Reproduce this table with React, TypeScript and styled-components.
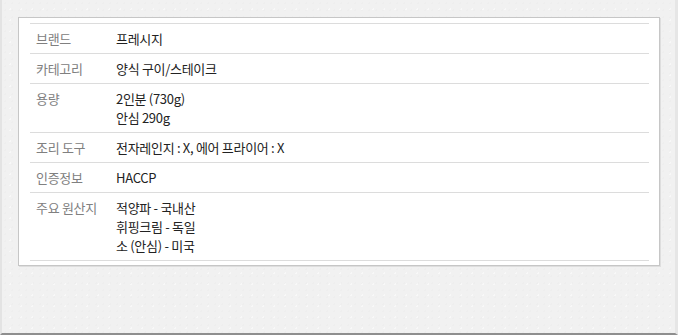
import { FC } from 'react'
import styled, { createGlobalStyle } from 'styled-components'

const GlobalStyle = createGlobalStyle`
  html, body {
    margin: 0;
    padding: 0;
    background: #f0f0f0;
  }
`

const Frame = styled.div`
  box-sizing: border-box;
  width: 678px;
  height: 335px;
  padding: 17px 18px 0 18px;
  background-color: #f1f1f1;
  background-image: radial-gradient(rgba(0, 0, 0, 0.012) 1px, transparent 1px),
    radial-gradient(rgba(255, 255, 255, 0.5) 1px, transparent 1px);
  background-size: 7px 7px, 11px 11px;
  background-position: 0 0, 3px 4px;
  border-left: 2px solid #e3e3e3;
  border-right: 3px solid #e6e6e6;
  border-bottom: 2px solid #8e8e8e;
  font-family: 'Noto Sans CJK KR', 'Noto Sans', sans-serif;
`

const Box = styled.div`
  box-sizing: border-box;
  width: 642px;
  margin-left: -2px;
  padding: 5px 10px 4px 11px;
  background: #fff;
  border: 1px solid #c6c6c6;
  box-shadow: 1px 1px 0 #dedede;
`

const Table = styled.div`
  border-top: 1px solid #dcdcdc;
`

const Row = styled.div`
  display: grid;
  grid-template-columns: 86px 1fr;
  padding: 5px 0;
  border-bottom: 1px solid #dcdcdc;
  font-size: 13px;
  line-height: 19px;
  letter-spacing: -0.3px;
`

const Label = styled.div`
  padding-left: 6px;
  color: #808080;
`

const Value = styled.div`
  color: #222;
`

const Line = styled.div``

type Spec = { label: string; values: string[] }

const specs: Spec[] = [
  { label: '브랜드', values: ['프레시지'] },
  { label: '카테고리', values: ['양식 구이/스테이크'] },
  { label: '용량', values: ['2인분 (730g)', '안심 290g'] },
  { label: '조리 도구', values: ['전자레인지 : X, 에어 프라이어 : X'] },
  { label: '인증정보', values: ['HACCP'] },
  { label: '주요 원산지', values: ['적양파 - 국내산', '휘핑크림 - 독일', '소 (안심) - 미국'] },
]

const App: FC = () => {
  return (
    <>
      <GlobalStyle />
      <Frame>
        <Box>
          <Table>
            {specs.map((s) => (
              <Row key={s.label}>
                <Label>{s.label}</Label>
                <Value>
                  {s.values.map((v) => (
                    <Line key={v}>{v}</Line>
                  ))}
                </Value>
              </Row>
            ))}
          </Table>
        </Box>
      </Frame>
    </>
  )
}

export default App
